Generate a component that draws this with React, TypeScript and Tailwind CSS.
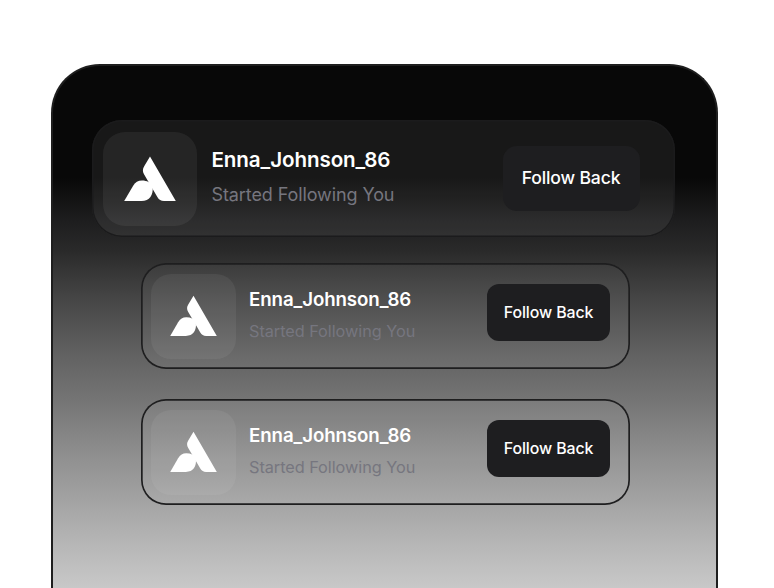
import { clsx } from "clsx";

function Logo({ className }: { className: string }) {
  return (
    <svg viewBox="0 0 52 46" className={className} fill="#fff" aria-hidden="true">
      <path d="M26 0.5 L51.8 45 H40 C37 45 35 43.8 33.5 41.2 L20 18.2 C18.5 15.5 18.5 12.8 20.2 10.2 Z" />
      <path d="M0.2 45 L9 30 C11.3 26.3 14 24.5 18 24.5 C23 24.5 26.8 26.5 28.6 30.5 C29.6 39 25.5 45 17.5 45 Z" />
    </svg>
  );
}

function FollowCard({ large = false }: { large?: boolean }) {
  return (
    <article
      className={clsx(
        "flex items-start",
        large
          ? "h-[117px] w-[583px] rounded-[30px] bg-white/[0.065] pt-3 pl-[11px] shadow-[inset_0_0_0_1.5px_#1b1b1c]"
          : "h-[106px] w-[489px] rounded-[25px] bg-white/[0.05] pt-[11px] pl-[10px] shadow-[inset_0_0_0_1.7px_#1e1e1f]",
      )}
    >
      <div
        className={clsx(
          "flex shrink-0 items-center justify-center bg-white/[0.06] pb-px",
          large ? "size-[94px] rounded-[22px]" : "size-[85px] rounded-[20px]",
        )}
      >
        <Logo className={large ? "h-[46px] w-[52px]" : "h-[42px] w-[47px]"} />
      </div>
      <div
        className={clsx(
          "whitespace-nowrap",
          large ? "ml-[14.5px] w-[291px] pt-[15px]" : "ml-[13px] w-[238px] pt-[14px]",
        )}
      >
        <h2
          className={clsx(
            "font-semibold text-white",
            large ? "text-[20.6px] leading-[26px] tracking-[-0.1px]" : "text-[18.7px] leading-[24px] tracking-[-0.1px]",
          )}
        >
          Enna_Johnson_86
        </h2>
        <p
          className={clsx(
            "text-[#76767f]",
            large
              ? "mt-[10px] text-[18px] leading-[24px] tracking-[-0.1px]"
              : "mt-2 text-[16.3px] leading-[22px] tracking-[-0.05px]",
          )}
        >
          Started Following You
        </p>
      </div>
      <button
        type="button"
        className={clsx(
          "shrink-0 bg-[#1e1e20] font-medium whitespace-nowrap text-white",
          large
            ? "mt-[14px] h-[65px] w-[137px] rounded-[14px] text-[17.6px] tracking-[-0.15px]"
            : "mt-[10px] h-[57px] w-[123px] rounded-[12px] text-[15.9px] tracking-[-0.1px]",
        )}
      >
        Follow Back
      </button>
    </article>
  );
}

export default function App() {
  return (
    <main className="h-[588px] overflow-hidden bg-white pt-16 pl-[51px] font-[Inter,sans-serif]">
      <section className="flex h-[580px] w-[667px] flex-col items-start rounded-t-[49px] border-2 border-b-0 border-[#1e1e1e] bg-[linear-gradient(180deg,#080808_0px,#080808_112px,#1d1d1e_154px,#2a2a2a_185px,#474747_235px,#606060_285px,#757575_335px,#8d8d8d_385px,#a3a3a3_435px,#b7b7b7_480px,#c8c8c8_522px)] pt-[54px] pl-[39px]">
        <FollowCard large />
        <div className="mt-[26px] ml-[49px] flex flex-col gap-[30px]">
          <FollowCard />
          <FollowCard />
        </div>
      </section>
    </main>
  );
}
